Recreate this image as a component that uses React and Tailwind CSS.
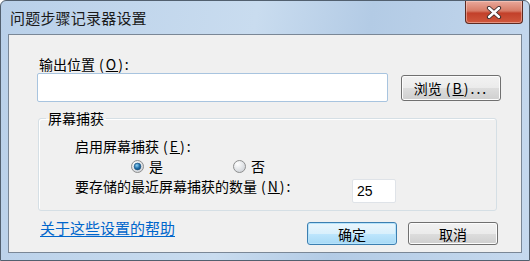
import React from "react";

// Win7 "问题步骤记录器设置" dialog
const FONT = { fontFamily: '"Noto Sans CJK SC", "Microsoft YaHei", sans-serif' };

function CloseX() {
  return (
    <svg width="16" height="13" viewBox="0 0 16 13">
      <path d="M3 2 L13 11 M13 2 L3 11" stroke="#3b2a2a" strokeWidth="4.2" strokeLinecap="round" />
      <path d="M3 2 L13 11 M13 2 L3 11" stroke="#ffffff" strokeWidth="2.4" strokeLinecap="round" />
    </svg>
  );
}

function Radio({ checked }) {
  return (
    <svg width="13" height="13" viewBox="0 0 13 13" className="shrink-0">
      <defs>
        <radialGradient id="rOff" cx="35%" cy="30%" r="75%">
          <stop offset="0%" stopColor="#ffffff" />
          <stop offset="100%" stopColor="#cfd3d8" />
        </radialGradient>
        <radialGradient id="rOn" cx="40%" cy="35%" r="70%">
          <stop offset="0%" stopColor="#8fd2f6" />
          <stop offset="60%" stopColor="#1f6ea8" />
          <stop offset="100%" stopColor="#124c7c" />
        </radialGradient>
      </defs>
      <circle cx="6.5" cy="6.5" r="6" fill="url(#rOff)" stroke="#8e8f8f" strokeWidth="1" />
      {checked && <circle cx="6.5" cy="6.5" r="3.4" fill="url(#rOn)" stroke="#1b4f7a" strokeWidth="0.6" />}
    </svg>
  );
}

// accelerator "(X)" — the original font draws these wider than ours
function Acc({ k, tail = ":" }) {
  return (
    <span className="ml-[4px] tracking-[2px]">
      (<u>{k}</u>){tail}
    </span>
  );
}

function Button({ children, primary, className = "" }) {
  return (
    <div
      className={
        "flex items-center justify-center rounded-[3px] border text-[14px] leading-[18px] text-black " +
        (primary
          ? "border-[#3c7fb1] bg-[linear-gradient(to_bottom,#eaf6fd_0%,#d9f0fc_50%,#bee6fd_51%,#a7d9f5_100%)] shadow-[inset_0_0_0_1px_#b6e3fb]"
          : "border-[#707070] bg-[linear-gradient(to_bottom,#f2f2f2_0%,#ebebeb_50%,#dddddd_51%,#cfcfcf_100%)] shadow-[inset_0_0_0_1px_#fcfcfc]") +
        " " +
        className
      }
    >
      {children}
    </div>
  );
}

export default function App() {
  return (
    <div
      style={FONT}
      className="w-[530px] h-[261px] flex flex-col rounded-t-[6px] border border-[#52606f] bg-[linear-gradient(100deg,#b9d0e9_0%,#c9dcef_45%,#b3cbe5_65%,#c6d9ee_100%)] px-[7px] pb-[7px]"
    >
      {/* title bar */}
      <div className="h-[33px] flex justify-between items-start shrink-0">
        <div className="pl-[2px] pt-[7px] text-[15px] leading-[20px] tracking-[0.2px] text-[#1b1b1b]">问题步骤记录器设置</div>
        <div className="mr-[-1px] w-[58px] h-[23px] rounded-b-[4px] border border-t-0 border-[#5c2a21] bg-[linear-gradient(to_bottom,#e9a99b_0%,#d77b66_45%,#c2402a_55%,#d0583d_100%)] flex items-center justify-center shadow-[inset_0_0_0_1px_rgba(255,220,210,0.45)]">
          <CloseX />
        </div>
      </div>

      {/* client area */}
      <div className="flex-1 border border-[#7a8796] bg-[#f0f0f0] flex flex-col pl-[29px] text-[14px] leading-[18px] text-black">
        <div className="mt-[20px] pl-[1px]">
          输出位置<Acc k="O" />
        </div>
        <div className="flex items-center">
          <div className="w-[351px] h-[29px] -ml-[1px] rounded-[2px] border border-[#a8c4df] bg-white" />
          <Button className="ml-[13px] w-[100px] h-[26px]">
            浏览<Acc k="B" tail="..." />
          </Button>
        </div>

        <fieldset className="mt-[7px] w-[459px] rounded-[3px] border border-[#d5dfe5] shadow-[inset_1px_1px_0_#ffffff] px-[36px] pb-[7px]">
          <legend className="-ml-[29px] px-[2px] leading-[18px]">屏幕捕获</legend>
          <div className="mt-[10px]">
            启用屏幕捕获<Acc k="E" />
          </div>
          <div className="mt-[2px] flex items-center h-[18px]">
            <div className="ml-[56px] flex items-center gap-[5px]">
              <Radio checked />
              <span>是</span>
            </div>
            <div className="ml-[70px] flex items-center gap-[5px]">
              <Radio />
              <span>否</span>
            </div>
          </div>
          <div className="mt-[2px] flex items-start">
            <span>
              要存储的最近屏幕捕获的数量<Acc k="N" />
            </span>
            <div
              className="ml-[auto] mr-[64px] mt-[2px] w-[44px] h-[24px] rounded-[2px] border border-[#dfe3e8] bg-white flex items-center pl-[4px] text-[14px] leading-[18px]"
              style={{ fontFamily: '"Liberation Sans", Arial, sans-serif' }}
            >
              25
            </div>
          </div>
        </fieldset>

        <div className="mt-[11px] flex items-start">
          <a className="-mt-[3px] ml-[2px] text-[#0066cc] underline underline-offset-[2px] text-[15px]">关于这些设置的帮助</a>
          <Button primary className="ml-auto w-[90px] h-[23px]">确定</Button>
          <Button className="ml-[11px] mr-[23px] w-[90px] h-[23px]">取消</Button>
        </div>
      </div>
    </div>
  );
}
